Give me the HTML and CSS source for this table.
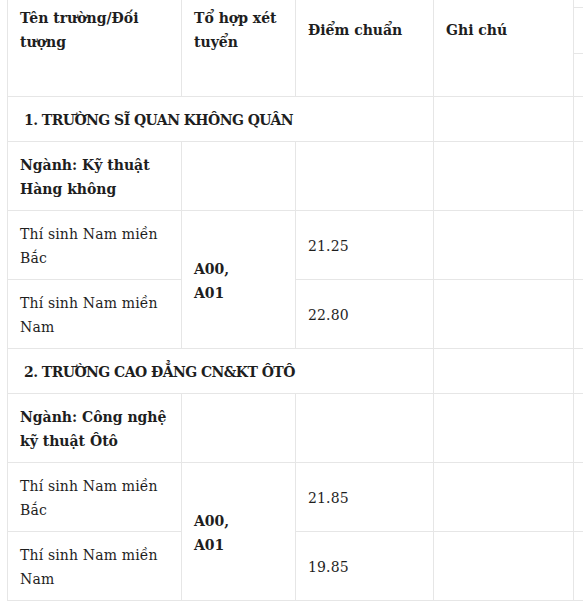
FILE: index.html
```html
<!DOCTYPE html>
<html lang="vi">
<head>
<meta charset="utf-8">
<title>Điểm chuẩn</title>
<link rel="stylesheet" href="styles.css">
</head>
<body>
<div class="wrap">
<table class="scores">
  <colgroup>
    <col class="c1"><col class="c2"><col class="c3"><col class="c4"><col class="c5">
  </colgroup>
  <thead>
    <tr class="head">
      <th>Tên trường/Đối<br>tượng</th>
      <th>Tổ hợp xét<br>tuyển</th>
      <th>Điểm chuẩn</th>
      <th>Ghi chú</th>
      <th class="extra"><div class="stub"></div></th>
    </tr>
  </thead>
  <tbody>
    <tr class="section">
      <td colspan="3" class="sec-title">1. TRƯỜNG SĨ QUAN KHÔNG QUÂN</td>
      <td></td><td></td>
    </tr>
    <tr>
      <td class="major">Ngành: Kỹ thuật<br>Hàng không</td>
      <td></td><td></td><td></td><td></td>
    </tr>
    <tr>
      <td>Thí sinh Nam miền<br>Bắc</td>
      <td rowspan="2" class="combo">A00,<br>A01</td>
      <td>21.25</td><td></td><td></td>
    </tr>
    <tr>
      <td>Thí sinh Nam miền<br>Nam</td>
      <td>22.80</td><td></td><td></td>
    </tr>
    <tr class="section">
      <td colspan="3" class="sec-title">2. TRƯỜNG CAO ĐẲNG CN&amp;KT ÔTÔ</td>
      <td></td><td></td>
    </tr>
    <tr>
      <td class="major">Ngành: Công nghệ<br>kỹ thuật Ôtô</td>
      <td></td><td></td><td></td><td></td>
    </tr>
    <tr>
      <td>Thí sinh Nam miền<br>Bắc</td>
      <td rowspan="2" class="combo">A00,<br>A01</td>
      <td>21.85</td><td></td><td></td>
    </tr>
    <tr>
      <td>Thí sinh Nam miền<br>Nam</td>
      <td>19.85</td><td></td><td></td>
    </tr>
  </tbody>
</table>
</div>
</body>
</html>
```

FILE: styles.css
```css
html, body {
  margin: 0;
  padding: 0;
  background: #fff;
  overflow: hidden;
}

.wrap {
  padding-left: 7px;
  margin-top: -5px;
}

.scores {
  border-collapse: collapse;
  table-layout: fixed;
  width: 600px;
  font-family: "DejaVu Serif", "Liberation Serif", serif;
  font-size: 14px;
  line-height: 24px;
  color: #1e1e1e;
}

.c1 { width: 174px; }
.c2 { width: 114px; }
.c3 { width: 138px; }
.c4 { width: 140px; }
.c5 { width: 34px; }

.scores th,
.scores td {
  border: 1px solid #e6e6e6;
  padding: 10px 12px;
  text-align: left;
  vertical-align: middle;
}

.scores td {
  letter-spacing: 0.15px;
  padding-top: 11px;
  padding-bottom: 9px;
}

.scores th {
  font-weight: bold;
  padding-bottom: 42px;
}

.scores th.extra {
  vertical-align: top;
  padding: 11px 0 0 0;
}

.stub {
  height: 45px;
  border-top: 1px solid #e6e6e6;
  border-bottom: 1px solid #e6e6e6;
}

.scores td.sec-title {
  font-weight: bold;
  padding-left: 16px;
  letter-spacing: -0.55px;
}

.scores td.major,
.scores td.combo {
  font-weight: bold;
  letter-spacing: 0;
}
```
